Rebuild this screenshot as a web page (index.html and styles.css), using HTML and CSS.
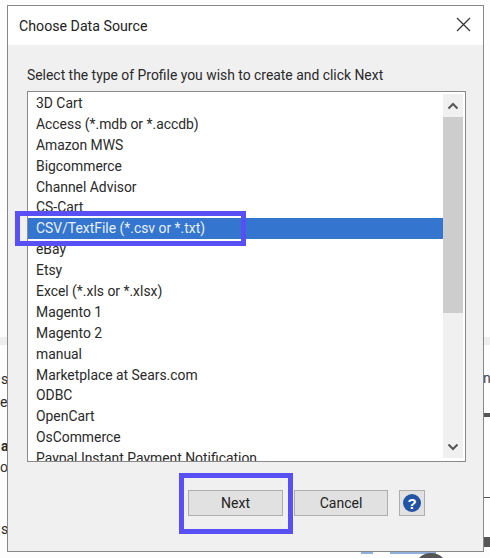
FILE: index.html
```html
<!DOCTYPE html>
<html lang="en">
<head>
    <meta charset="UTF-8">
    <meta name="viewport" content="width=device-width, initial-scale=1.0">
    <title>Choose Data Source</title>
    <link rel="stylesheet" href="styles.css">
</head>
<body>
    <!-- page peeking out behind the dialog -->
    <div class="behind">
        <div class="peek-band"></div>
        <span class="peek peek-s1">s</span>
        <span class="peek peek-e">e</span>
        <span class="peek peek-a">a</span>
        <span class="peek peek-to">o</span>
        <span class="peek peek-s2">s</span>
        <span class="peek peek-n">n</span>
        <div class="peek-bar peek-bar-1"></div>
        <div class="peek-bar peek-bar-2"></div>
        <div class="peek-bar peek-bar-3"></div>
        <div class="peek-link peek-link-1"></div>
        <div class="peek-link peek-link-2"></div>
        <div class="peek-knob"></div>
    </div>

    <div class="dialog">
        <div class="titlebar">
            <div class="title">Choose Data Source</div>
            <svg class="close" width="15" height="15" viewBox="0 0 15 15">
                <path d="M1 1 L14 14 M14 1 L1 14" stroke="#333" stroke-width="1.2" fill="none"/>
            </svg>
        </div>
        <div class="body">
            <div class="prompt">Select the type of Profile you wish to create and click Next</div>
            <div class="listbox">
                <div class="items">
                    <div class="item">3D Cart</div>
                    <div class="item">Access (*.mdb or *.accdb)</div>
                    <div class="item">Amazon MWS</div>
                    <div class="item">Bigcommerce</div>
                    <div class="item">Channel Advisor</div>
                    <div class="item">CS-Cart</div>
                    <div class="item selected">CSV/TextFile (*.csv or *.txt)</div>
                    <div class="item">eBay</div>
                    <div class="item">Etsy</div>
                    <div class="item">Excel (*.xls or *.xlsx)</div>
                    <div class="item">Magento 1</div>
                    <div class="item">Magento 2</div>
                    <div class="item">manual</div>
                    <div class="item">Marketplace at Sears.com</div>
                    <div class="item">ODBC</div>
                    <div class="item">OpenCart</div>
                    <div class="item">OsCommerce</div>
                    <div class="item">Paypal Instant Payment Notification</div>
                </div>
                <div class="scrollbar">
                    <svg class="arrow" width="12" height="8" viewBox="0 0 12 8">
                        <path d="M1.5 6.5 L6 2 L10.5 6.5" stroke="#555" stroke-width="2" fill="none"/>
                    </svg>
                    <div class="thumb"></div>
                    <svg class="arrow arrow-down" width="12" height="8" viewBox="0 0 12 8">
                        <path d="M1.5 1.5 L6 6 L10.5 1.5" stroke="#555" stroke-width="2" fill="none"/>
                    </svg>
                </div>
            </div>
            <div class="actions">
                <button class="btn btn-next">Next</button>
                <button class="btn btn-cancel">Cancel</button>
                <button class="btn btn-help">
                    <svg width="20" height="20" viewBox="0 0 20 20">
                        <circle cx="10" cy="10" r="9" fill="#2353a5"/>
                        <text x="10" y="15.5" class="help-mark">?</text>
                    </svg>
                </button>
            </div>
        </div>
        <div class="callout callout-row"></div>
        <div class="callout callout-next"></div>
    </div>
</body>
</html>
```

FILE: styles.css
```css
html, body {
    margin: 0;
    height: 100%;
}
body {
    position: relative;
    overflow: hidden;
    background: #fdfdfd;
    font-family: Roboto, "Liberation Sans", sans-serif;
    font-size: 13.9px;
    color: #2a2a2a;
}
.behind {
    position: absolute;
    left: 0;
    top: 0;
    width: 490px;
    height: 558px;
    overflow: hidden;
}
.peek {
    position: absolute;
    font-size: 14px;
}
.peek-band {
    position: absolute;
    left: 0;
    top: 337px;
    width: 490px;
    height: 8px;
    background: #eeeeee;
}
.peek-s1 { left: 1px; top: 371px; }
.peek-e { left: 0; top: 394px; }
.peek-a { left: 1px; top: 438px; font-weight: bold; }
.peek-to { left: 0; top: 459px; color: #333; }
.peek-s2 { left: 1px; top: 521px; }
.peek-n { left: 483px; top: 370px; color: #444; }
.peek-bar {
    position: absolute;
    left: 484px;
    width: 6px;
    background: #555;
}
.peek-bar-1 { top: 413px; height: 4px; }
.peek-bar-2 { top: 497px; height: 1px; }
.peek-bar-3 { top: 537px; height: 10px; }
.peek-link {
    position: absolute;
    top: 552px;
    height: 2px;
    background: #8fb0dc;
}
.peek-link-1 { left: 361px; width: 12px; }
.peek-link-2 { left: 390px; width: 46px; }
.peek-knob {
    position: absolute;
    left: 414px;
    top: 553px;
    width: 34px;
    height: 34px;
    border-radius: 50%;
    background: #555;
}
.dialog {
    position: absolute;
    left: 7px;
    top: 5px;
    width: 475px;
    height: 545px;
    border: 1px solid #888;
    background: #f0f0f0;
}
.titlebar {
    height: 39px;
    background: #fff;
    display: flex;
    justify-content: space-between;
    align-items: center;
    padding: 0 12px 0 11px;
}
.title {
    padding-top: 1px;
    font-size: 14.2px;
    color: #222;
}
.close {
    margin-bottom: 3px;
}
.body {
    padding: 18px 17px 0 19px;
}
.prompt {
    height: 28px;
    line-height: 25px;
}
.listbox {
    height: 369px;
    border: 1px solid #8a8a8a;
    background: #fff;
    display: flex;
    overflow: hidden;
}
.items {
    flex: 1;
    padding-top: 1px;
    min-width: 0;
}
.item {
    height: 20.9px;
    line-height: 21.5px;
    padding-left: 8px;
    white-space: nowrap;
}
.selected {
    background: #3375cf;
    color: #e8f0fb;
}
.scrollbar {
    width: 20px;
    margin: 2px 2px 3px 0;
    background: #f0f0f0;
    display: flex;
    flex-direction: column;
    align-items: center;
}
.arrow {
    flex: none;
    margin-top: 8px;
}
.thumb {
    width: 100%;
    height: 196px;
    margin-top: 7px;
    background: #cdcdcd;
}
.arrow-down {
    margin-top: auto;
    margin-bottom: 7px;
}
.actions {
    display: flex;
    justify-content: flex-end;
    gap: 11px;
    margin-top: 28px;
    padding-right: 41px;
}
.btn {
    height: 26px;
    padding: 0;
    border: 1px solid #adadad;
    background: #e1e1e1;
    font-family: inherit;
    font-size: 14px;
    color: #222;
    display: flex;
    align-items: center;
    justify-content: center;
}
.btn-next {
    width: 95px;
}
.btn-cancel {
    width: 94px;
}
.btn-help {
    width: 26px;
}
.help-mark {
    font-family: "Liberation Sans", sans-serif;
    font-size: 15px;
    font-weight: bold;
    fill: #fff;
    text-anchor: middle;
}
.callout {
    position: absolute;
    border: 5px solid #5850f5;
    box-sizing: border-box;
}
.callout-row {
    left: 7px;
    top: 205px;
    width: 231px;
    height: 35px;
}
.callout-next {
    left: 171px;
    top: 467px;
    width: 114px;
    height: 61px;
}
```
